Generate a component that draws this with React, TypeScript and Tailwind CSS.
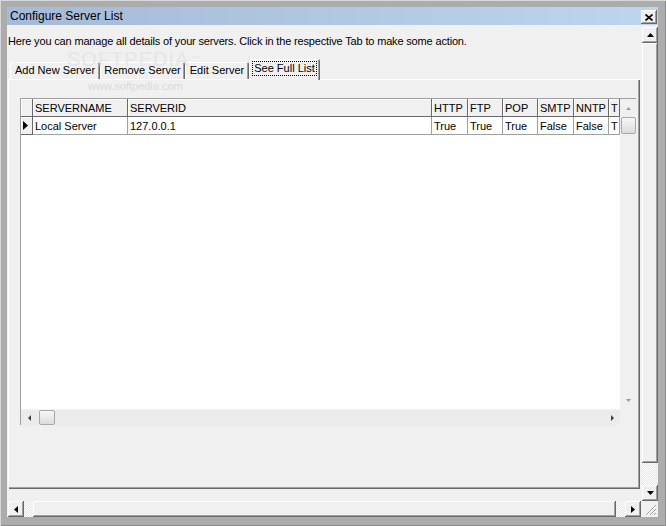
import React from "react";

const raised =
  "bg-[#f0f0f0] shadow-[inset_-1px_-1px_#696969,inset_1px_1px_#ffffff,inset_-2px_-2px_#a0a0a0,inset_2px_2px_#f0f0f0]";
const dither =
  "bg-[image:repeating-conic-gradient(#ffffff_0_25%,#e6e6e6_0_50%)] bg-size-[2px_2px]";

const Tri = ({ dir, color = "#000", w = 7, h = 4 }: { dir: "up" | "down" | "left" | "right"; color?: string; w?: number; h?: number }) => {
  const pts =
    dir === "up"
      ? `0,${h} ${w},${h} ${w / 2},0`
      : dir === "down"
      ? `0,0 ${w},0 ${w / 2},${h}`
      : dir === "left"
      ? `${w},0 ${w},${h} 0,${h / 2}`
      : `0,0 0,${h} ${w},${h / 2}`;
  return (
    <svg width={w} height={h} viewBox={`0 0 ${w} ${h}`}>
      <polygon points={pts} fill={color} />
    </svg>
  );
};

const cols = [
  { name: "SERVERNAME", w: "w-[95px]", v: "Local Server" },
  { name: "SERVERID", w: "w-[304px]", v: "127.0.0.1" },
  { name: "HTTP", w: "w-[36px]", v: "True" },
  { name: "FTP", w: "w-[35px]", v: "True" },
  { name: "POP", w: "w-[35px]", v: "True" },
  { name: "SMTP", w: "w-[36px]", v: "False" },
  { name: "NNTP", w: "w-[35px]", v: "False" },
  { name: "T", w: "w-[11px]", v: "T" },
];

const Grid = () => (
  <div className="w-[616px] h-[327px] border-l border-t border-[#a0a0a0] flex flex-col bg-white">
    <div className="flex-1 flex min-h-0">
      {/* cells */}
      <div className="flex-1 flex flex-col overflow-hidden">
        {/* header */}
        <div className="h-[18px] flex shrink-0">
          <div className="w-[12px] shrink-0 bg-[#f0f0f0] border-r border-b border-[#696969] shadow-[inset_1px_1px_#ffffff]" />
          {cols.map((c) => (
            <div
              key={c.name}
              className={`${c.w} shrink-0 bg-[#f0f0f0] border-r border-b border-[#696969] shadow-[inset_1px_1px_#ffffff] pl-[2px] pt-[2px] leading-[15px] overflow-hidden whitespace-nowrap`}
            >
              {c.name}
            </div>
          ))}
        </div>
        {/* data row */}
        <div className="h-[18px] flex shrink-0">
          <div className="w-[12px] shrink-0 bg-[#f0f0f0] border-r border-b border-[#696969] shadow-[inset_1px_1px_#ffffff] flex items-center pl-[2px]">
            <Tri dir="right" w={5} h={9} />
          </div>
          {cols.map((c) => (
            <div
              key={c.name}
              className={`${c.w} shrink-0 border-r border-b border-[#a0a0a0] pl-[2px] pt-[2px] leading-[15px] overflow-hidden whitespace-nowrap`}
            >
              {c.v}
            </div>
          ))}
        </div>
        <div className="flex-1 bg-white" />
      </div>
      {/* grid vertical scroll */}
      <div className="w-[16px] shrink-0 bg-[#f0f0f0] flex flex-col items-center">
        <div className="h-[18px] w-full flex items-center justify-center">
          <Tri dir="up" color="#9a9a9a" w={5} h={3} />
        </div>
        <div className="w-[15px] h-[17px] rounded-[2px] border border-[#a8a8a8] bg-gradient-to-b from-[#f6f6f6] to-[#dcdcdc]" />
        <div className="flex-1" />
        <div className="h-[18px] w-full flex items-center justify-center">
          <Tri dir="down" color="#9a9a9a" w={5} h={3} />
        </div>
      </div>
    </div>
    {/* grid horizontal scroll */}
    <div className="h-[16px] shrink-0 flex">
      <div className="flex-1 bg-[#ebebeb] flex items-center border-t border-[#f4f4f4]">
        <div className="w-[16px] flex justify-center">
          <Tri dir="left" color="#404040" w={3} h={6} />
        </div>
        <div className="ml-[2px] w-[16px] h-[15px] rounded-[2px] border border-[#a8a8a8] bg-gradient-to-b from-[#f6f6f6] to-[#dcdcdc]" />
        <div className="flex-1" />
        <div className="w-[16px] flex justify-center">
          <Tri dir="right" color="#404040" w={3} h={6} />
        </div>
      </div>
      <div className="w-[16px] bg-[#f0f0f0]" />
    </div>
  </div>
);

const tabs = [
  { label: "Add New Server", w: "w-[90px]" },
  { label: "Remove Server", w: "w-[85px]" },
  { label: "Edit Server", w: "w-[64px]" },
];

export default function App() {
  return (
    <div className="w-[666px] h-[526px] bg-[#acacac] shadow-[inset_1px_1px_#d8d8d8,inset_-1px_-1px_#8a8a8a] pt-[7px] pl-[7px] pr-[8px] pb-[9px] flex flex-col text-[11px] text-black font-['Liberation_Sans',Arial,sans-serif]">
      {/* Title bar */}
      <div className="h-[18px] shrink-0 flex items-center justify-between bg-gradient-to-r from-[#a4bad6] to-[#bdd5ef] pl-[3px] pr-[1px]">
        <span className="text-[12px] leading-none">Configure Server List</span>
        <div className={`w-[16px] h-[14px] mt-[2px] flex items-center justify-center ${raised}`}>
          <svg width="8" height="7" viewBox="0 0 8 7">
            <path d="M0.5 0.5 L7.5 6.5 M7.5 0.5 L0.5 6.5" stroke="#000" strokeWidth="1.7" />
          </svg>
        </div>
      </div>

      <div className="flex-1 flex flex-col min-h-0">
        <div className="flex-1 flex min-h-0">
          {/* Client area */}
          <div className="relative w-[634px] bg-[#f0f0f0] pt-[10px] flex flex-col">
            <div className="pl-[1px] h-[14px] leading-[13px] tracking-[-0.16px] whitespace-nowrap">
              Here you can manage all details of your servers. Click in the respective Tab to make some action.
            </div>

            {/* Tabs */}
            <div className="mt-[10px] h-[20px] pl-[3px] flex items-end relative z-10">
              {tabs.map((t) => (
                <div
                  key={t.label}
                  className={`${t.w} h-[17px] flex items-center justify-center bg-[#f0f0f0] rounded-t-[2px] shadow-[inset_1px_1px_#ffffff,inset_-1px_0_#696969,inset_-2px_0_#a0a0a0] whitespace-nowrap`}
                >
                  {t.label}
                </div>
              ))}
              <div className="w-[71px] h-[21px] -mb-px flex justify-center pt-[2px] bg-[#f0f0f0] rounded-t-[2px] shadow-[inset_1px_1px_#ffffff,inset_-1px_0_#696969,inset_-2px_0_#a0a0a0]">
                <span className="h-[15px] leading-[13px] px-[1px] border border-dotted border-black whitespace-nowrap">
                  See Full List
                </span>
              </div>
            </div>

            {/* Tab page */}
            <div className="ml-[1px] w-[632px] h-[410px] bg-[#f0f0f0] shadow-[inset_1px_1px_#ffffff,inset_-1px_-1px_#696969,inset_-2px_-2px_#a0a0a0] pl-[12px] pt-[19px]">
              <Grid />
            </div>

            {/* Watermark */}
            <div className="absolute left-[60px] top-[24px] text-[20px] leading-[20px] tracking-[1px] text-[#e6e6e6] pointer-events-none z-20">
              SOFTPEDIA<span className="text-[7px] align-top ml-[3px]">™</span>
            </div>
            <div className="absolute left-[81px] top-[56px] text-[11px] leading-[11px] text-[#dadada] pointer-events-none z-20">
              www.softpedia.com
            </div>
          </div>

          {/* Window vertical scrollbar */}
          <div className="w-[17px] bg-[#f0f0f0] pl-[1px] pt-[2px] flex flex-col">
            <div className={`w-[16px] h-[16px] flex items-center justify-center ${raised}`}>
              <Tri dir="up" />
            </div>
            <div className={`w-[16px] h-[420px] ${raised}`} />
            <div className={`w-[16px] flex-1 ${dither}`} />
            <div className={`w-[16px] h-[16px] flex items-center justify-center ${raised}`}>
              <Tri dir="down" />
            </div>
          </div>
        </div>

        {/* Window horizontal scrollbar */}
        <div className="h-[16px] shrink-0 flex bg-[#f0f0f0]">
          <div className="w-[634px] flex pl-[1px]">
            <div className={`w-[16px] h-[16px] flex items-center justify-center ${raised}`}>
              <Tri dir="left" w={4} h={7} />
            </div>
            <div className={`w-[9px] ${dither}`} />
            <div className={`flex-1 ${raised}`} />
            <div className={`w-[9px] ${dither}`} />
            <div className={`w-[16px] h-[16px] flex items-center justify-center ${raised}`}>
              <Tri dir="right" w={4} h={7} />
            </div>
          </div>
          <div className="w-[17px] flex items-end justify-end pr-[1px] pb-[1px]">
            <svg width="12" height="12" viewBox="0 0 12 12">
              <path d="M11 1 L1 11 M11 5 L5 11 M11 9 L9 11" stroke="#a0a0a0" strokeWidth="1" />
              <path d="M11 2 L2 11 M11 6 L6 11 M11 10 L10 11" stroke="#ffffff" strokeWidth="1" />
            </svg>
          </div>
        </div>
      </div>
    </div>
  );
}
